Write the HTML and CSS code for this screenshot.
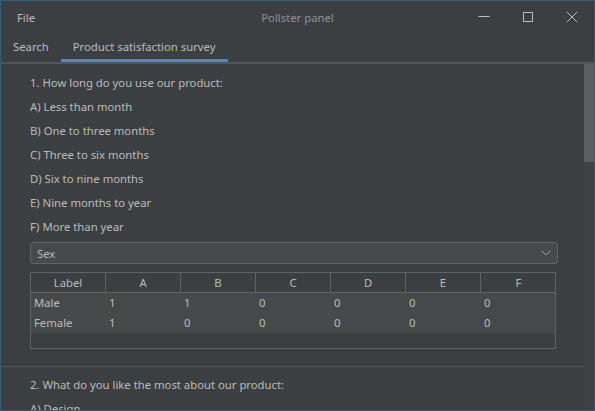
FILE: index.html
```html
<!DOCTYPE html>
<html>
<head>
<meta charset="utf-8">
<link rel="stylesheet" href="styles.css">
</head>
<body>
<div class="window">
  <div class="titlebar">
    <div class="menu">File</div>
    <div class="title">Pollster panel</div>
    <div class="controls">
      <span class="ctl"><svg width="12" height="12" viewBox="0 0 12 12"><path d="M0.5 5.5H11.5" stroke="#bbbbbb" stroke-width="1" fill="none"/></svg></span>
      <span class="ctl"><svg width="12" height="12" viewBox="0 0 12 12"><rect x="1.5" y="1.5" width="9" height="9" stroke="#bbbbbb" stroke-width="1" fill="none"/></svg></span>
      <span class="ctl"><svg width="12" height="12" viewBox="0 0 12 12"><path d="M1 1L11 11M11 1L1 11" stroke="#bbbbbb" stroke-width="1" fill="none"/></svg></span>
    </div>
  </div>
  <div class="tabs">
    <div class="tab">Search</div>
    <div class="tab active">Product satisfaction survey</div>
  </div>
  <div class="body">
    <div class="content">
      <section class="question first">
        <p class="line">1. How long do you use our product:</p>
        <p class="line">A) Less than month</p>
        <p class="line">B) One to three months</p>
        <p class="line">C) Three to six months</p>
        <p class="line">D) Six to nine months</p>
        <p class="line">E) Nine months to year</p>
        <p class="line">F) More than year</p>
        <div class="combo">
          <span>Sex</span>
          <svg width="10" height="6" viewBox="0 0 10 6"><path d="M0.5 0.5L5 5L9.5 0.5" stroke="#9a9d9f" stroke-width="1" fill="none"/></svg>
        </div>
        <div class="table">
          <div class="row head">
            <div class="cell">Label</div><div class="cell">A</div><div class="cell">B</div><div class="cell">C</div><div class="cell">D</div><div class="cell">E</div><div class="cell">F</div>
          </div>
          <div class="row">
            <div class="cell">Male</div><div class="cell">1</div><div class="cell">1</div><div class="cell">0</div><div class="cell">0</div><div class="cell">0</div><div class="cell">0</div>
          </div>
          <div class="row">
            <div class="cell">Female</div><div class="cell">1</div><div class="cell">0</div><div class="cell">0</div><div class="cell">0</div><div class="cell">0</div><div class="cell">0</div>
          </div>
        </div>
      </section>
      <div class="separator"></div>
      <section class="question">
        <p class="line">2. What do you like the most about our product:</p>
        <p class="line">A) Design</p>
      </section>
    </div>
    <div class="scrollbar"><div class="thumb"></div></div>
  </div>
</div>
</body>
</html>
```
FILE: styles.css
```css
* { box-sizing: border-box; }
html, body { margin: 0; padding: 0; }
body {
  background: #3c3f41;
  font-family: "Noto Sans", "Open Sans", sans-serif;
  font-size: 11.3px;
  color: #bbbbbb;
  overflow: hidden;
}
.window {
  width: 595px;
  height: 411px;
  border: 1px solid #2f5d7a;
  background: #3c3f41;
  display: flex;
  flex-direction: column;
  overflow: hidden;
}
.titlebar {
  height: 32px;
  flex: none;
  display: grid;
  grid-template-columns: 1fr auto 1fr;
  align-items: center;
}
.menu { padding-left: 16px; color: #bbbbbb; }
.title { color: #8e9193; }
.controls {
  display: flex;
  justify-content: flex-end;
  align-items: center;
  height: 100%;
}
.ctl {
  width: 44px;
  height: 100%;
  display: flex;
  align-items: center;
  justify-content: center;
}
.ctl svg { display: block; }
.tabs {
  height: 31px;
  flex: none;
  display: flex;
  border-bottom: 2px solid #515658;
}
.tab {
  padding: 1px 12px 0;
  display: flex;
  align-items: center;
  border-bottom: 3px solid transparent;
}
.tab.active { border-bottom-color: #4a88c7; }
.body {
  flex: 1;
  display: flex;
  min-height: 0;
}
.content {
  flex: 1;
  overflow: hidden;
}
.question { padding: 7px 26px 0 29px; }
.question:not(.first) { padding-top: 6px; }
.line {
  margin: 0;
  line-height: 24px;
  height: 24px;
  white-space: nowrap;
}
.combo {
  margin-top: 3px;
  height: 22px;
  border: 1px solid #5e6366;
  border-radius: 3px;
  background: #45494a;
  display: flex;
  align-items: center;
  justify-content: space-between;
  padding: 0 6px 0 6px;
}
.combo svg { display: block; }
.table {
  margin-top: 8px;
  width: 526px;
  height: 77px;
  border: 1px solid #5e6366;
  background: #3c3f41;
}
.row {
  display: grid;
  grid-template-columns: repeat(7, 75px);
  height: 20px;
  background: #45494a;
}
.row.head {
  background: #3c3f41;
  border-bottom: 1px solid #5e6366;
}
.cell {
  padding-left: 3px;
  line-height: 20px;
  white-space: nowrap;
}
.row.head .cell {
  text-align: center;
  padding-left: 0;
  border-right: 1px solid #5e6366;
  line-height: 19px;
}
.row.head .cell:last-child { border-right: none; }
.separator {
  margin-top: 17px;
  height: 1px;
  background: #515658;
}
.scrollbar {
  width: 10px;
  flex: none;
  background: #3f4244;
}
.thumb {
  height: 98px;
  background: #5b5e60;
}
```
